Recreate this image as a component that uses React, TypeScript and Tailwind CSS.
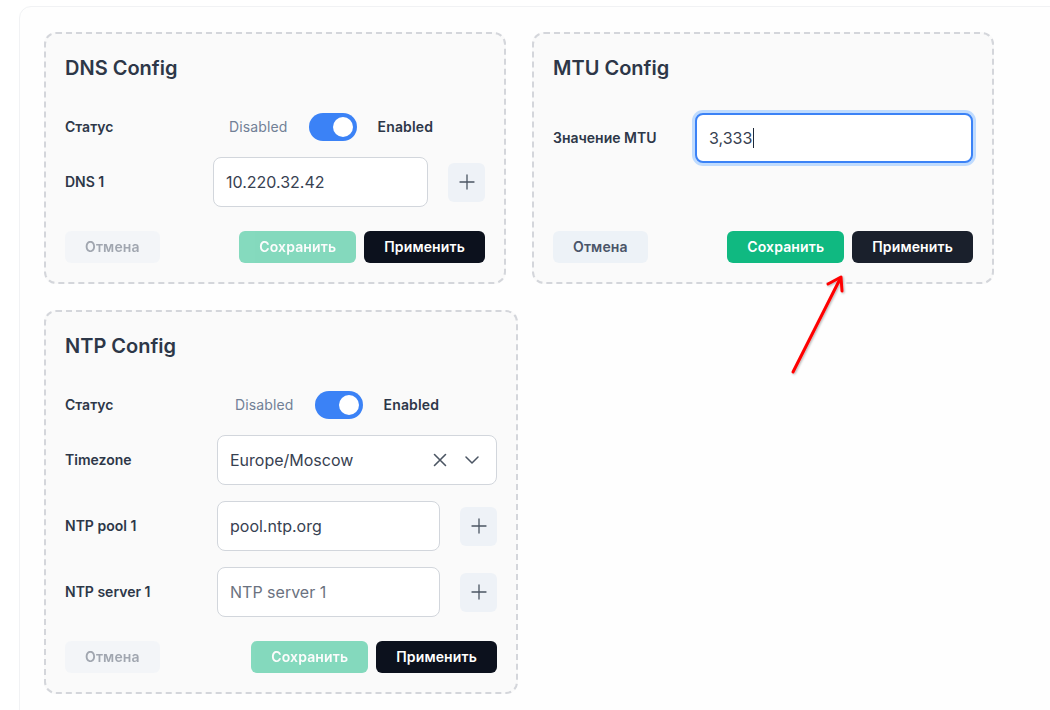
import type { ReactNode } from 'react';
import clsx from 'clsx';

const font = { fontFamily: 'Inter, "Noto Sans", sans-serif' };

const PlusIcon = () => (
  <svg width="16" height="16" viewBox="0 0 16 16" fill="none" stroke="#4b5563" strokeWidth="1.3" strokeLinecap="round">
    <path d="M8 1v14M1 8h14" />
  </svg>
);

const Card = ({ title, width, children }: { title: string; width: string; children: ReactNode }) => (
  <div className={clsx('flex flex-col rounded-xl border-2 border-dashed border-[#d4d6db] bg-[#fafafa] px-[19px] pb-[19px] pt-5', width)}>
    <h2 className="mb-[31px] h-7 text-xl font-semibold leading-7 text-[#2d3748]">{title}</h2>
    {children}
  </div>
);

const Label = ({ children, width }: { children: ReactNode; width: string }) => (
  <div className={clsx('shrink-0 text-sm font-semibold text-[#2d3748]', width)}>{children}</div>
);

const StatusRow = ({ labelWidth, offset }: { labelWidth: string; offset: string }) => (
  <div className="flex h-7 items-center">
    <Label width={labelWidth}>Статус</Label>
    <div className={clsx('flex items-center gap-[21px] text-sm', offset)}>
      <span className="tracking-[0.01em] text-[#718096]">Disabled</span>
      <div className="flex h-7 w-12 items-center justify-end rounded-full bg-[#3b82f6] pr-1">
        <div className="h-5 w-5 rounded-full bg-white" />
      </div>
      <span className="font-semibold tracking-[0.01em] text-[#2d3748]">Enabled</span>
    </div>
  </div>
);

const TextBox = ({ value, placeholder, width }: { value?: string; placeholder?: string; width: string }) => (
  <div className={clsx('flex h-[50px] items-center rounded-lg border border-[#d2d6dc] bg-white pl-3 text-base', width)}>
    {value ? <span className="text-[#374151]">{value}</span> : <span className="text-[#6b7280]">{placeholder}</span>}
  </div>
);

const AddButton = () => (
  <div className="ml-5 flex h-[39px] w-[37px] items-center justify-center rounded-md bg-[#eef2f7]">
    <PlusIcon />
  </div>
);

const Actions = ({ disabled }: { disabled?: boolean }) => (
  <div className="mt-auto flex items-center text-sm font-semibold tracking-[0.01em]">
    <button className={clsx('h-8 rounded-md bg-[#edf2f7] px-5 text-[#4a5568]', disabled && 'opacity-50')}>Отмена</button>
    <div className="ml-auto flex gap-2">
      <button className={clsx('h-8 rounded-md bg-[#10b981] px-5 text-white', disabled && 'opacity-50')}>Сохранить</button>
      <button className={clsx('h-8 rounded-md px-5 text-white', disabled ? 'bg-[#0c111d]' : 'bg-[#1a202c]')}>Применить</button>
    </div>
  </div>
);

export default function App() {
  return (
    <div className="relative h-[710px] w-full overflow-hidden bg-white" style={font}>
      <div className="ml-[19px] mt-[6px] min-h-[720px] w-[1060px] rounded-xl border border-[#f1f2f4] bg-[#fefefe] pl-6 pt-[25px]">
        <div className="flex items-stretch gap-[26px]">
          <Card title="DNS Config" width="w-[462px]">
            <StatusRow labelWidth="w-[148px]" offset="ml-4" />
            <div className="mt-4 flex items-center">
              <Label width="w-[148px]">DNS 1</Label>
              <TextBox value="10.220.32.42" width="w-[215px]" />
              <AddButton />
            </div>
            <div className="mt-6">
              <Actions disabled />
            </div>
          </Card>

          <Card title="MTU Config" width="w-[462px]">
            <div className="flex items-center">
              <Label width="w-[142px]">Значение MTU</Label>
              <div className="flex h-[50px] w-[278px] items-center rounded-lg border-2 border-[#3b82f6] bg-white pl-3 text-base text-[#374151] ring-[3px] ring-[#bfdbfe]">
                3,333<span className="ml-px h-5 w-px bg-gray-800" />
              </div>
            </div>
            <Actions />
          </Card>
        </div>

        <div className="mt-[26px] flex">
          <Card title="NTP Config" width="w-[474px]">
            <StatusRow labelWidth="w-[152px]" offset="ml-[18px]" />
            <div className="mt-4 flex items-center">
              <Label width="w-[152px]">Timezone</Label>
              <div className="flex h-[50px] w-[280px] items-center rounded-lg border border-[#d2d6dc] bg-white pl-[12px] pr-[17px] text-base text-[#374151]">
                <span>Europe/Moscow</span>
                <svg className="ml-auto" width="14" height="14" viewBox="0 0 14 14" fill="none" stroke="#4b5563" strokeWidth="1.6" strokeLinecap="round">
                  <path d="M1.5 1.5l11 11M12.5 1.5l-11 11" />
                </svg>
                <svg className="ml-[18px]" width="14" height="8" viewBox="0 0 14 8" fill="none" stroke="#4b5563" strokeWidth="1.5" strokeLinecap="round" strokeLinejoin="round">
                  <path d="M1 1l6 6 6-6" />
                </svg>
              </div>
            </div>
            <div className="mt-4 flex items-center">
              <Label width="w-[152px]">NTP pool 1</Label>
              <TextBox value="pool.ntp.org" width="w-[223px]" />
              <AddButton />
            </div>
            <div className="mt-4 flex items-center">
              <Label width="w-[152px]">NTP server 1</Label>
              <TextBox placeholder="NTP server 1" width="w-[223px]" />
              <AddButton />
            </div>
            <div className="mt-6">
              <Actions disabled />
            </div>
          </Card>
        </div>
      </div>

      <svg className="pointer-events-none absolute left-0 top-0" width="1050" height="710">
        <defs>
          <filter id="sh" x="-20%" y="-20%" width="140%" height="140%">
            <feDropShadow dx="1" dy="1" stdDeviation="1" floodColor="#000" floodOpacity="0.3" />
          </filter>
        </defs>
        <g stroke="#ff0000" strokeWidth="3" strokeLinecap="round" strokeLinejoin="round" fill="none" filter="url(#sh)">
          <path d="M793 372L840 279" />
          <path d="M828 284L841 277L842 291" />
        </g>
      </svg>
    </div>
  );
}
